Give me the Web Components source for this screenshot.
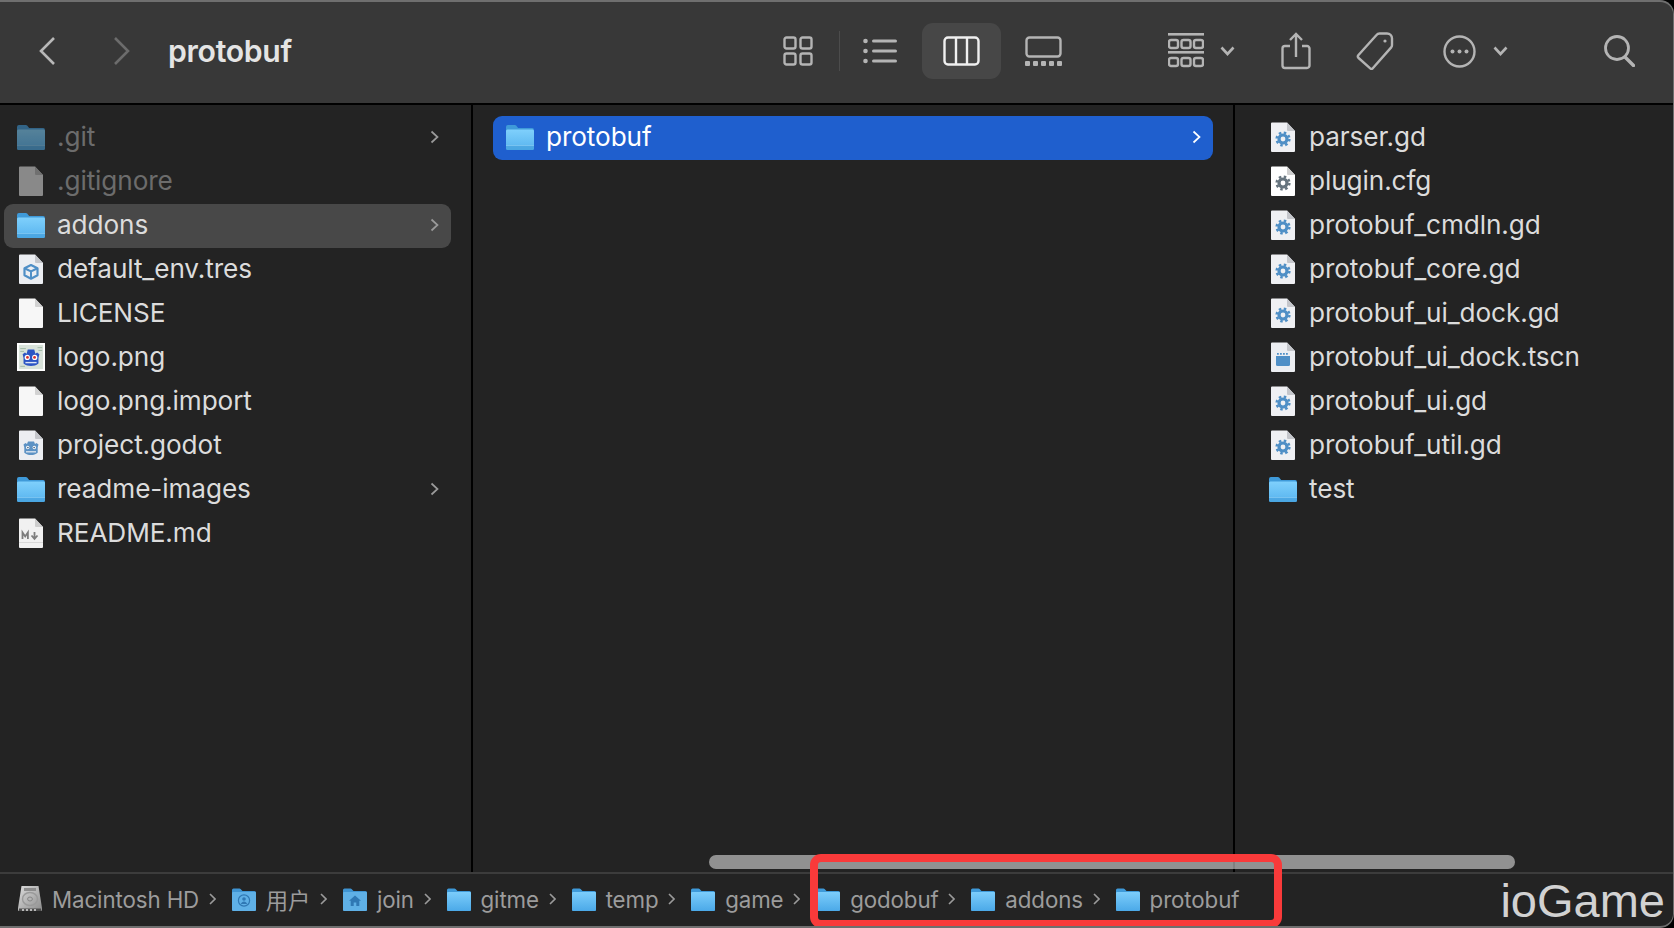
<!DOCTYPE html>
<html lang="en">
<head>
<meta charset="utf-8">
<title>protobuf</title>
<style>
  html, body { margin: 0; height: 100%; background: #000; }
  body { font-family: Inter, "Noto Sans CJK SC", sans-serif; }
</style>
</head>
<body>
<finder-window>
  <finder-toolbar slot="toolbar" title="protobuf"></finder-toolbar>
  <finder-column slot="columns" kind="first">
    <file-row icon="folder" arrow dim>.git</file-row>
    <file-row icon="page-gray" dim>.gitignore</file-row>
    <file-row icon="folder" arrow active>addons</file-row>
    <file-row icon="box">default_env.tres</file-row>
    <file-row icon="page">LICENSE</file-row>
    <file-row icon="logo">logo.png</file-row>
    <file-row icon="page">logo.png.import</file-row>
    <file-row icon="godot">project.godot</file-row>
    <file-row icon="folder" arrow>readme-images</file-row>
    <file-row icon="md">README.md</file-row>
  </finder-column>
  <finder-column slot="columns" kind="second">
    <file-row icon="folder" arrow selected>protobuf</file-row>
  </finder-column>
  <finder-column slot="columns" kind="third">
    <file-row icon="gear">parser.gd</file-row>
    <file-row icon="gear-gray">plugin.cfg</file-row>
    <file-row icon="gear">protobuf_cmdln.gd</file-row>
    <file-row icon="gear">protobuf_core.gd</file-row>
    <file-row icon="gear">protobuf_ui_dock.gd</file-row>
    <file-row icon="scene">protobuf_ui_dock.tscn</file-row>
    <file-row icon="gear">protobuf_ui.gd</file-row>
    <file-row icon="gear">protobuf_util.gd</file-row>
    <file-row icon="folder">test</file-row>
  </finder-column>
  <path-bar slot="path">
    <path-crumb icon="disk">Macintosh HD</path-crumb>
    <path-crumb icon="user">用户</path-crumb>
    <path-crumb icon="home">join</path-crumb>
    <path-crumb>gitme</path-crumb>
    <path-crumb>temp</path-crumb>
    <path-crumb>game</path-crumb>
    <path-crumb>godobuf</path-crumb>
    <path-crumb>addons</path-crumb>
    <path-crumb last>protobuf</path-crumb>
  </path-bar>
</finder-window>

<script>
// every icon lives here, viewBox is set per icon
const folderBody = (id, top, bottom, edge) => `
  <defs><linearGradient id="${id}" x1="0" y1="0" x2="0" y2="1">
    <stop offset="0" stop-color="${top}"/><stop offset="1" stop-color="${bottom}"/>
  </linearGradient></defs>
  <path d="M0 3a2 2 0 0 1 2-2h7.5a2 2 0 0 1 1.4.6L13 4h15a2 2 0 0 1 2 2v18a2 2 0 0 1-2 2H2a2 2 0 0 1-2-2z" fill="${edge}"/>
  <path d="M0 7a1.5 1.5 0 0 1 1.5-1.5h27A1.5 1.5 0 0 1 30 7v17a2 2 0 0 1-2 2H2a2 2 0 0 1-2-2z" fill="url(#${id})"/>
  <path d="M0 21.5h30V24a2 2 0 0 1-2 2H2a2 2 0 0 1-2-2z" fill="${edge}" opacity=".55"/>
  <rect y="21" width="30" height=".7" fill="#a8dcfa" opacity=".6"/>`;

const pageBody = (fill, edge) => `
  <path d="M1 .5h15L24 9v20a1 1 0 0 1-1 1H1a1 1 0 0 1-1-1V1.5a1 1 0 0 1 1-1z" fill="${fill}"/>
  <path d="M16 .5V8a1 1 0 0 0 1 1h7z" fill="${edge}"/>`;

const gear = (color) => `
  <circle cx="12" cy="17" r="6.4" fill="none" stroke="${color}" stroke-width="2.4" stroke-dasharray="2.5 2.53"/>
  <circle cx="12" cy="17" r="4" fill="none" stroke="${color}" stroke-width="3.2"/>`;

const ICONS = {
  folder: { w: 28, h: 26, vb: '0 0 30 26', body: folderBody('f', '#7fd0fc', '#57b3ee', '#3f9ad9'), ratio: 'none' },
  page: { w: 24, h: 30, vb: '0 0 24 30', body: pageBody('#f7f7f7', '#d2d2d2') },
  'page-gray': { w: 24, h: 30, vb: '0 0 24 30', body: pageBody('#dedede', '#b0b0b0') },
  gear: { w: 24, h: 30, vb: '0 0 24 30', body: pageBody('#eff0f3', '#c4c6cb') + gear('#4f8fc6') },
  'gear-gray': { w: 24, h: 30, vb: '0 0 24 30', body: pageBody('#ffffff', '#cfcfcf') + gear('#66747e') },
  box: { w: 24, h: 30, vb: '0 0 24 30', body: pageBody('#eceef2', '#c4c6cb') + `
    <path d="M12 11l6.5 3.300v7L12 24.700l-6.500-3.400v-7z" fill="none" stroke="#4f8fc6" stroke-width="2.200" stroke-linejoin="round"/>
    <path d="M6 14.500l6 3 6-3M12 17.500v7" fill="none" stroke="#4f8fc6" stroke-width="2"/>` },
  godot: { w: 24, h: 30, vb: '0 0 24 30', body: pageBody('#eceef2', '#c4c6cb') + `
    <path d="M4.5 14.5l2-1.5 1.5 1 1-2.5h6l1 2.5 1.5-1 2 1.5-.8 3v5.2c-2 1.8-4 2.3-6.7 2.3s-4.700-.5-6.700-2.300V17.500z" fill="#5c92c4"/>
    <circle cx="8.700" cy="17.500" r="1.700" fill="#fff"/><circle cx="15.300" cy="17.500" r="1.700" fill="#fff"/>
    <circle cx="8.900" cy="17.600" r=".8" fill="#33536f"/><circle cx="15.100" cy="17.600" r=".8" fill="#33536f"/>
    <path d="M7 21.800h10" stroke="#dfe8f1" stroke-width="1.300"/>` },
  scene: { w: 24, h: 30, vb: '0 0 24 30', body: pageBody('#eceef2', '#c4c6cb') + `
    <path d="M5 14h14v8.500a1.500 1.500 0 0 1-1.500 1.500h-11A1.500 1.500 0 0 1 5 22.500z" fill="#4f8fc6"/>
    <path d="M6 11h1.800v1.800H6zm3 0h1.800v1.800H9zm3 0h1.800v1.800H12zm3 0h1.800v1.800H15z" fill="#4f8fc6"/>` },
  md: { w: 24, h: 30, vb: '0 0 24 30', body: pageBody('#f1f1f1', '#cdcdcd') + `
    <rect y="24" width="24" height="1" fill="#d8d8d8"/>
    <path d="M3.500 21v-6.500l2.700 4 2.700-4V21" fill="none" stroke="#7d7d7d" stroke-width="1.800"/>
    <path d="M15.500 14v6M12.500 17.500l3 3.300 3-3.300" fill="none" stroke="#7d7d7d" stroke-width="1.800"/>` },
  logo: { w: 28, h: 28, vb: '0 0 30 30', body: `
    <rect width="30" height="30" fill="#fff"/>
    <rect x="2" y="2" width="26" height="26" fill="#d9e3da"/>
    <path d="M3.500 6h6M3.500 9h4M3.500 25h5M22 5h5M23 8h4" stroke="#9db7a3" stroke-width="1"/>
    <path d="M6 12l2.500-1.800 1.800 1.200L11.500 7h7l1.200 4.400 1.800-1.200L24 12l-1 4v6c-2.500 2-5 2.600-8 2.600s-5.500-.6-8-2.600v-6z" fill="#2c55c4"/>
    <circle cx="11" cy="15.500" r="2.800" fill="#fff"/><circle cx="19" cy="15.500" r="2.800" fill="#fff"/>
    <circle cx="11.200" cy="15.500" r="1.500" fill="#d8302c"/><circle cx="18.800" cy="15.500" r="1.500" fill="#d8302c"/>
    <path d="M9 21h12" stroke="#dbe4f5" stroke-width="1.500"/>` },
  crumb: { w: 24, h: 23, vb: '0 0 24 23', body: `
    <defs><linearGradient id="c" x1="0" y1="0" x2="0" y2="1"><stop offset="0" stop-color="#7ccdfb"/><stop offset="1" stop-color="#4ba9e8"/></linearGradient></defs>
    <path d="M0 2a1.500 1.500 0 0 1 1.500-1.500h6a1.500 1.500 0 0 1 1.100.5L10.500 3H22.500A1.500 1.500 0 0 1 24 4.500v17a1.500 1.500 0 0 1-1.500 1.500h-21A1.500 1.500 0 0 1 0 21.500z" fill="#3f9ad9"/>
    <path d="M0 5a1 1 0 0 1 1-1h22a1 1 0 0 1 1 1v16.500a1.500 1.500 0 0 1-1.500 1.500h-21A1.500 1.500 0 0 1 0 21.500z" fill="url(#c)"/>` },
  user: { w: 24, h: 23, vb: '0 0 24 23', body: `
    <path d="M0 2a1.500 1.500 0 0 1 1.500-1.500h6a1.500 1.500 0 0 1 1.100.5L10.500 3H22.500A1.500 1.500 0 0 1 24 4.500v17a1.500 1.500 0 0 1-1.500 1.500h-21A1.500 1.500 0 0 1 0 21.500z" fill="#3f94d2"/>
    <path d="M0 5a1 1 0 0 1 1-1h22a1 1 0 0 1 1 1v16.500a1.500 1.500 0 0 1-1.500 1.500h-21A1.500 1.500 0 0 1 0 21.500z" fill="#5fb0e6"/>
    <circle cx="12" cy="12.500" r="5.600" fill="none" stroke="#2f78b4" stroke-width="1.200"/>
    <circle cx="12" cy="11" r="1.800" fill="#2f78b4"/><path d="M8.800 16c.6-1.800 1.800-2.600 3.200-2.600s2.600.8 3.200 2.600z" fill="#2f78b4"/>` },
  home: { w: 24, h: 23, vb: '0 0 24 23', body: `
    <path d="M0 2a1.500 1.500 0 0 1 1.500-1.500h6a1.500 1.500 0 0 1 1.100.5L10.500 3H22.500A1.500 1.500 0 0 1 24 4.500v17a1.500 1.500 0 0 1-1.500 1.500h-21A1.500 1.500 0 0 1 0 21.500z" fill="#3f94d2"/>
    <path d="M0 5a1 1 0 0 1 1-1h22a1 1 0 0 1 1 1v16.500a1.500 1.500 0 0 1-1.500 1.500h-21A1.500 1.500 0 0 1 0 21.500z" fill="#5fb0e6"/>
    <path d="M12 7.500l6 5.300h-1.700V18h-3v-3.500h-2.600V18h-3v-5.200H6z" fill="#2f78b4"/>` },
  disk: { w: 24, h: 26, vb: '0 0 24 26', body: `
    <defs><linearGradient id="d" x1="0" y1="0" x2="1" y2="1"><stop offset="0" stop-color="#dcdcdc"/><stop offset="1" stop-color="#8c8c8c"/></linearGradient></defs>
    <path d="M3.500 0h17L24 22v2a1 1 0 0 1-1 1H1a1 1 0 0 1-1-1v-2z" fill="url(#d)"/>
    <rect x="6" y="2" width="12" height="3" fill="#8d8d8d"/>
    <ellipse cx="12" cy="13" rx="7.500" ry="6.500" fill="none" stroke="#9a9a9a" stroke-width="1.400"/>
    <ellipse cx="12" cy="13" rx="2.400" ry="2" fill="#b5b5b5" stroke="#858585"/>
    <path d="M1 22.500h22V25H1z" fill="#4c4c4c"/>
    <path d="M4 23h2v2H4zm4 0h2v2H8zm4 0h2v2h-2zm4 0h2v2h-2z" fill="#b8b8b8"/>` }
};

const iconSvg = (name) => {
  const i = ICONS[name] || ICONS.folder;
  const ratio = i.ratio ? ` preserveAspectRatio="${i.ratio}"` : '';
  return `<svg width="${i.w}" height="${i.h}" viewBox="${i.vb}"${ratio} aria-hidden="true">${i.body}</svg>`;
};

class FileRow extends HTMLElement {
  connectedCallback() {
    this.attachShadow({ mode: 'open' });
    const arrow = this.hasAttribute('arrow')
      ? '<svg class="arrow" width="9" height="14" viewBox="0 0 9 14"><path d="M1.500 1.500L7.500 7l-6 5.500" fill="none" stroke="currentColor" stroke-width="1.700"/></svg>'
      : '';
    this.shadowRoot.innerHTML = `
      <style>
        :host {
          display: flex;
          align-items: center;
          box-sizing: border-box;
          height: 44px;
          padding: 0 12px 3px 12px;
          border-radius: 9px;
          color: #dcdcdc;
          font: 400 26.2px Inter, "Noto Sans CJK SC", sans-serif;
          letter-spacing: -0.1px;
        }
        :host([active]) { background: #484848; }
        :host([selected]) { background: #1f5fce; color: #fff; }
        :host([dim]) { color: #6c6c6c; }
        :host([dim]) .icon { opacity: .55; }
        .icon { width: 30px; display: flex; justify-content: center; flex: none; margin-right: 11px; }
        .name { flex: 1; white-space: nowrap; }
        .arrow { color: #9a9a9a; flex: none; }
        :host([selected]) .arrow { color: #fff; }
      </style>
      <span class="icon">${iconSvg(this.getAttribute('icon'))}</span>
      <span class="name"><slot></slot></span>
      ${arrow}
    `;
  }
}

class FinderColumn extends HTMLElement {
  connectedCallback() {
    this.attachShadow({ mode: 'open' });
    this.shadowRoot.innerHTML = `
      <style>
        :host {
          display: block;
          box-sizing: border-box;
          padding-top: 11px;
          border-right: 2px solid #000;
        }
        :host([kind=first]) { width: 473px; padding-left: 4px; padding-right: 20px; }
        :host([kind=second]) { width: 762px; padding-left: 20px; padding-right: 20px; }
        :host([kind=third]) { flex: 1; padding-left: 21px; border-right: 0; }
      </style>
      <slot></slot>
    `;
  }
}

class FinderToolbar extends HTMLElement {
  connectedCallback() {
    this.attachShadow({ mode: 'open' });
    const stroke = 'fill="none" stroke="currentColor" stroke-width="2.400"';
    this.shadowRoot.innerHTML = `
      <style>
        :host {
          display: flex;
          align-items: center;
          box-sizing: border-box;
          height: 105px;
          padding: 0 39px 1px 39px;
          background: #383838;
          border-bottom: 2px solid #000;
          color: #b4b4b4;
        }
        svg { display: block; flex: none; }
        .title { margin-left: 38px; color: #e4e4e4; font: 600 30.2px Inter, sans-serif; letter-spacing: -0.3px; }
        .tools { display: flex; align-items: center; margin-left: auto; }
        .divider { width: 1px; height: 40px; background: #4c4c4c; margin: 0 23px 0 26px; }
        .on { display: flex; align-items: center; justify-content: center; width: 79px; height: 56px; margin: 0 24px 0 25px; background: #474747; border-radius: 11px; color: #f0f0f0; }
      </style>
      <svg width="17" height="30" viewBox="0 0 17 30" ${stroke} style="color:#b8b8b8"><path d="M15 2L2 15l13 13" stroke-width="2.600"/></svg>
      <svg width="17" height="30" viewBox="0 0 17 30" ${stroke} style="margin-left:57px;color:#6c6c6c"><path d="M2 2l13 13L2 28" stroke-width="2.600"/></svg>
      <span class="title">${this.getAttribute('title')}</span>
      <div class="tools">
        <svg width="30" height="30" viewBox="0 0 30 30" ${stroke}><rect x="1.500" y="1.500" width="11" height="11" rx="2"/><rect x="17.500" y="1.500" width="11" height="11" rx="2"/><rect x="1.500" y="17.500" width="11" height="11" rx="2"/><rect x="17.500" y="17.500" width="11" height="11" rx="2"/></svg>
        <span class="divider"></span>
        <svg width="34" height="26" viewBox="0 0 34 26"><g fill="currentColor"><circle cx="2.500" cy="3" r="2.300"/><circle cx="2.500" cy="13" r="2.300"/><circle cx="2.500" cy="23" r="2.300"/><rect x="9" y="1.500" width="25" height="3" rx="1.500"/><rect x="9" y="11.500" width="25" height="3" rx="1.500"/><rect x="9" y="21.500" width="25" height="3" rx="1.500"/></g></svg>
        <span class="on"><svg width="37" height="30" viewBox="0 0 37 30" ${stroke} stroke-width="2.600"><rect x="1.500" y="1.500" width="34" height="27" rx="3.500"/><path d="M13 1.500v27M24 1.500v27"/></svg></span>
        <svg width="37" height="30" viewBox="0 0 37 30"><rect x="1.500" y="1.500" width="34" height="19" rx="3" ${stroke}/><g fill="currentColor"><rect x="0" y="25" width="5" height="5" rx="1"/><rect x="8" y="25" width="5" height="5" rx="1"/><rect x="16" y="25" width="5" height="5" rx="1"/><rect x="24" y="25" width="5" height="5" rx="1"/><rect x="32" y="25" width="5" height="5" rx="1"/></g></svg>
        <svg width="36" height="36" viewBox="0 0 36 36" style="margin-left:106px"><g fill="currentColor"><rect width="36" height="2.600"/><rect y="18" width="36" height="2.600"/></g><g ${stroke} stroke-width="2"><rect x="1" y="7" width="9" height="8" rx="2"/><rect x="13.500" y="7" width="9" height="8" rx="2"/><rect x="26" y="7" width="9" height="8" rx="2"/><rect x="1" y="25" width="9" height="8" rx="2"/><rect x="13.500" y="25" width="9" height="8" rx="2"/><rect x="26" y="25" width="9" height="8" rx="2"/></g></svg>
        <svg width="15" height="10" viewBox="0 0 15 10" ${stroke} style="margin-left:16px"><path d="M1.500 1.500L7.500 8l6-6.500" stroke-width="2.600"/></svg>
        <svg width="30" height="38" viewBox="0 0 30 38" ${stroke} style="margin-left:46px"><path d="M9 14H4a2.500 2.500 0 0 0-2.500 2.500v17A2.500 2.500 0 0 0 4 36h22a2.500 2.500 0 0 0 2.500-2.500v-17A2.500 2.500 0 0 0 26 14h-5M15 25V2M9 8l6-6 6 6"/></svg>
        <svg width="38" height="38" viewBox="0 0 38 38" ${stroke} style="margin-left:45px"><path d="M24 1.500h7a5 5 0 0 1 5 5v6.500a4 4 0 0 1-.8 2.400L17 36a2 2 0 0 1-2.800.4L2.600 26a2 2 0 0 1-.3-2.700L20.500 3a4 4 0 0 1 3.500-1.500z"/><circle cx="29" cy="9" r="1.600" fill="currentColor" stroke="none"/></svg>
        <svg width="33" height="33" viewBox="0 0 33 33" ${stroke} style="margin-left:49px"><circle cx="16.500" cy="16.500" r="15"/><g fill="currentColor" stroke="none"><circle cx="9.500" cy="16.500" r="2"/><circle cx="16.500" cy="16.500" r="2"/><circle cx="23.500" cy="16.500" r="2"/></g></svg>
        <svg width="15" height="10" viewBox="0 0 15 10" ${stroke} style="margin-left:17px"><path d="M1.500 1.500L7.500 8l6-6.500" stroke-width="2.600"/></svg>
        <svg width="31" height="32" viewBox="0 0 31 32" ${stroke} style="margin-left:96px"><circle cx="13" cy="13" r="11.500" stroke-width="2.800"/><path d="M21 22l8.500 8.500" stroke-width="3.400" stroke-linecap="round"/></svg>
      </div>
    `;
  }
}

class PathCrumb extends HTMLElement {
  connectedCallback() {
    this.attachShadow({ mode: 'open' });
    const name = this.getAttribute('icon') || 'crumb';
    const chevron = this.hasAttribute('last') ? '' :
      '<svg class="chev" width="7" height="12" viewBox="0 0 7 12"><path d="M1 1l5 5-5 5" fill="none" stroke="currentColor" stroke-width="1.600"/></svg>';
    this.shadowRoot.innerHTML = `
      <style>
        :host { display: inline-flex; align-items: center; white-space: nowrap; }
        svg { display: block; flex: none; }
        .name { margin-left: 10px; }
        .chev { margin: 0 16px 0 9.7px; color: #9a9a9a; }
      </style>
      ${iconSvg(name)}
      <span class="name"><slot></slot></span>
      ${chevron}
    `;
  }
}

class PathBar extends HTMLElement {
  connectedCallback() {
    this.attachShadow({ mode: 'open' });
    this.shadowRoot.innerHTML = `
      <style>
        :host {
          display: flex;
          align-items: center;
          box-sizing: border-box;
          height: 56px;
          padding: 0 0 4px 18px;
          background: #232323;
          border-top: 2px solid #3c3c3c;
          color: #9c9c9c;
          font: 400 22.3px Inter, "Noto Sans CJK SC", sans-serif;
          letter-spacing: -0.1px;
        }
      </style>
      <slot></slot>
    `;
  }
}

class FinderWindow extends HTMLElement {
  connectedCallback() {
    this.attachShadow({ mode: 'open' });
    this.shadowRoot.innerHTML = `
      <style>
        :host {
          display: flex;
          flex-direction: column;
          position: relative;
          width: 1674px;
          height: 928px;
          overflow: hidden;
          background: #232323;
          border-radius: 0 14px 14px 0;
        }
        .columns { flex: 1; display: flex; min-height: 0; }
        /* things that lie over the window */
        .frame {
          position: absolute; inset: 0;
          border: solid #6f6f6f;
          border-width: 2px 1px 2px 0;
          border-radius: 0 14px 14px 0;
          pointer-events: none;
        }
        .thumb {
          position: absolute; left: 709px; top: 855px;
          width: 806px; height: 14px;
          border-radius: 7px;
          background: rgba(255, 255, 255, .5);
        }
        .mark {
          position: absolute; left: 810px; top: 854px;
          box-sizing: border-box;
          width: 472px; height: 74px;
          border: 8px solid #f93a3a;
          border-radius: 11px;
        }
        .watermark {
          position: absolute; right: 9px; top: 874px;
          color: #d2d2d2;
          font: 400 47px/54px "Liberation Sans", sans-serif;
        }
      </style>
      <slot name="toolbar"></slot>
      <div class="columns"><slot name="columns"></slot></div>
      <slot name="path"></slot>
      <div class="thumb"></div>
      <div class="mark"></div>
      <div class="frame"></div>
      <div class="watermark">ioGame</div>
    `;
  }
}

customElements.define('file-row', FileRow);
customElements.define('finder-column', FinderColumn);
customElements.define('finder-toolbar', FinderToolbar);
customElements.define('path-crumb', PathCrumb);
customElements.define('path-bar', PathBar);
customElements.define('finder-window', FinderWindow);
</script>
</body>
</html>
